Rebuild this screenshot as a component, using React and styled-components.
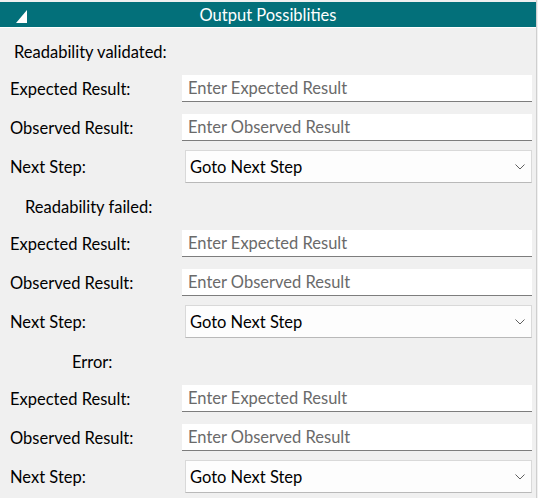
import React from "react";
import styled, { createGlobalStyle } from "styled-components";

const GlobalStyle = createGlobalStyle`
  html, body {
    margin: 0;
    padding: 0;
    background: #f0f0f0;
  }
  * {
    box-sizing: border-box;
  }
`;

const Panel = styled.div`
  width: 537px;
  height: 498px;
  background: #f0f0f0;
  border-right: 1px solid #cfcfcf;
  font-family: Lato, "Noto Sans", sans-serif;
  font-size: 16.5px;
  color: #000;
  overflow: hidden;
`;

const Header = styled.div`
  margin-top: 2px;
  height: 26px;
  background: #03707a;
  border-bottom: 1px solid #ffffff;
  display: flex;
  align-items: center;
  justify-content: center;
  position: relative;
  color: #fff;
  font-size: 16.5px;
`;

const Toggle = styled.svg`
  position: absolute;
  left: 16px;
  top: 8px;
`;

const Content = styled.div`
  display: flex;
  flex-direction: column;
  gap: 3px;
  padding: 6px 4px 0 10px;
`;

const Section = styled.div`
  display: flex;
  flex-direction: column;
`;

const Heading = styled.div`
  height: 35px;
  display: flex;
  align-items: center;
  padding-left: ${(p) => p.$indent}px;
`;

const Row = styled.div`
  height: 39px;
  display: grid;
  grid-template-columns: 172px 1fr;
  align-items: center;
`;

const Label = styled.span`
  white-space: nowrap;
`;

const TextInput = styled.input`
  height: 27px;
  width: 100%;
  border: none;
  border-bottom: 1px solid #7d7d7d;
  background: #fff;
  padding: 0 6px;
  font-family: inherit;
  font-size: 16.5px;
  color: #000;
  outline: none;

  &::placeholder {
    color: #6a6a6a;
  }
`;

const SelectBox = styled.div`
  position: relative;
  margin-left: 3px;
  height: 33px;
  background: #fdfdfd;
  border: 1px solid #d9d9d9;
  border-bottom-color: #b9b9b9;
  display: flex;
  align-items: center;
  padding-left: 4px;
`;

const Chevron = styled.svg`
  position: absolute;
  right: 6px;
  top: 13px;
`;

const sections = [
  { title: "Readability validated:", indent: 4 },
  { title: "Readability failed:", indent: 15 },
  { title: "Error:", indent: 62 },
];

const App = () => {
  return (
    <>
      <GlobalStyle />
      <Panel>
        <Header>
          <Toggle width="12" height="13" viewBox="0 0 12 13">
            <polygon points="11,0 11,13 0,13" fill="#fff" />
          </Toggle>
          Output Possiblities
        </Header>
        <Content>
          {sections.map((s) => (
            <Section key={s.title}>
              <Heading $indent={s.indent}>{s.title}</Heading>
              <Row>
                <Label>Expected Result:</Label>
                <TextInput placeholder="Enter Expected Result" />
              </Row>
              <Row>
                <Label>Observed Result:</Label>
                <TextInput placeholder="Enter Observed Result" />
              </Row>
              <Row>
                <Label>Next Step:</Label>
                <SelectBox>
                  Goto Next Step
                  <Chevron width="10" height="6" viewBox="0 0 10 6">
                    <polyline points="0.5,0.5 5,5 9.5,0.5" fill="none" stroke="#606060" strokeWidth="1" />
                  </Chevron>
                </SelectBox>
              </Row>
            </Section>
          ))}
        </Content>
      </Panel>
    </>
  );
};

export default App;
